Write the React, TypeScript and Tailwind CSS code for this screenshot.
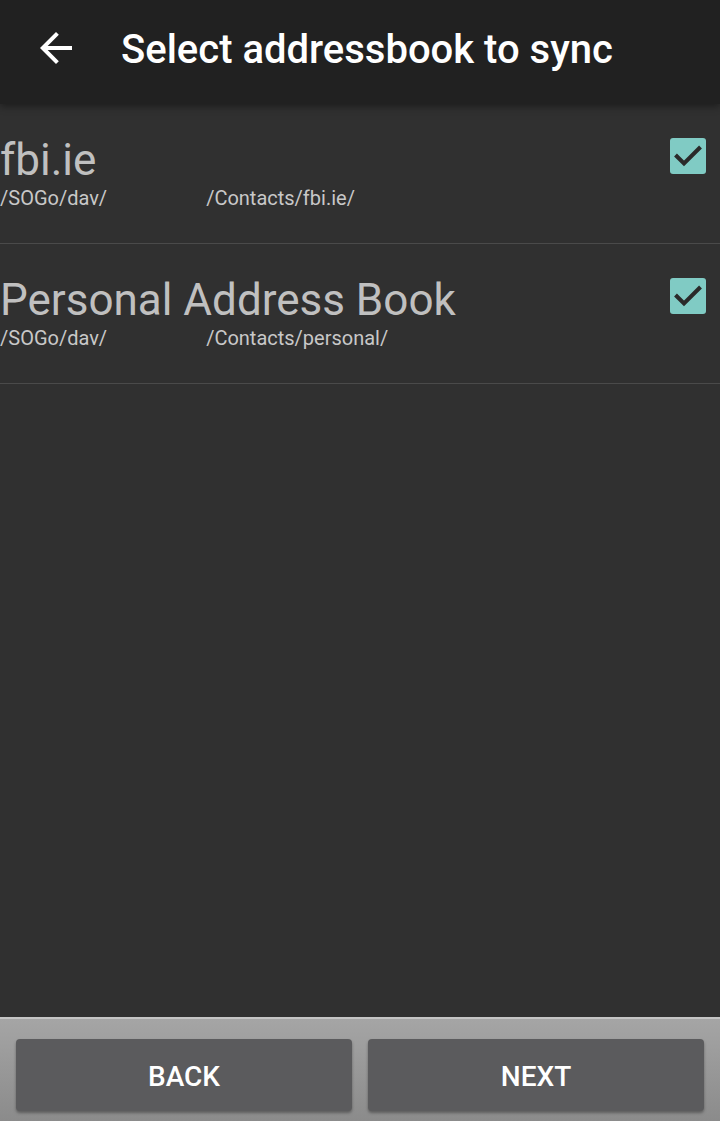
const books = [
  { name: "fbi.ie", path: "/Contacts/fbi.ie/" },
  { name: "Personal Address Book", path: "/Contacts/personal/" },
];

function CheckBox() {
  return (
    <div className="w-[36px] h-[36px] rounded-[3px] bg-[#80cbc4]">
      <svg width="36" height="36" viewBox="0 0 36 36">
        <path d="M5.5 17l8.5 8.5 16.5-16.5" fill="none" stroke="#2a2a2a" strokeWidth="4" />
      </svg>
    </div>
  );
}

export default function App() {
  return (
    <div className="w-[720px] h-[1121px] flex flex-col bg-[#303030] overflow-hidden" style={{ fontFamily: "Roboto, sans-serif" }}>
      <div className="h-[104px] shrink-0 bg-[#212121] flex items-center shadow-[0_2px_8px_rgba(0,0,0,0.45)] relative z-10">
        <svg className="ml-[32px] mb-[8px]" width="48" height="48" viewBox="0 0 24 24">
          <path d="M20 11H7.83l5.59-5.59L12 4l-8 8 8 8 1.41-1.41L7.83 13H20v-2z" fill="#ffffff" />
        </svg>
        <h1 className="ml-[41px] text-[40px] leading-[40px] font-medium text-white mb-[5px]">Select addressbook to sync</h1>
      </div>

      <div className="flex-1">
        {books.map((b) => (
          <div key={b.name} className="h-[140px] border-b border-[#4a4a4a] flex justify-between">
            <div className="pt-[30px]">
              <div className="text-[44px] leading-[52px] text-[#c0c0c0]">{b.name}</div>
              <div className="text-[20px] leading-[24px] text-[#c8c8c8] whitespace-pre">
                /SOGo/dav/<span className="inline-block w-[99px]" />{b.path}
              </div>
            </div>
            <div className="pt-[34px] pr-[14px]">
              <CheckBox />
            </div>
          </div>
        ))}
      </div>

      <div className="h-[104px] shrink-0 border-t-2 border-[#c4c4c4] bg-gradient-to-b from-[#a5a5a5] to-[#8b8b8b] flex gap-[16px] px-[16px] pt-[20px]">
        <button className="flex-1 h-[72px] rounded-[4px] bg-[#5b5b5d] text-white text-[28px] font-medium pt-[3px] shadow-[0_2px_3px_rgba(0,0,0,0.35)]">BACK</button>
        <button className="flex-1 h-[72px] rounded-[4px] bg-[#5b5b5d] text-white text-[28px] font-medium pt-[3px] shadow-[0_2px_3px_rgba(0,0,0,0.35)]">NEXT</button>
      </div>
    </div>
  );
}
